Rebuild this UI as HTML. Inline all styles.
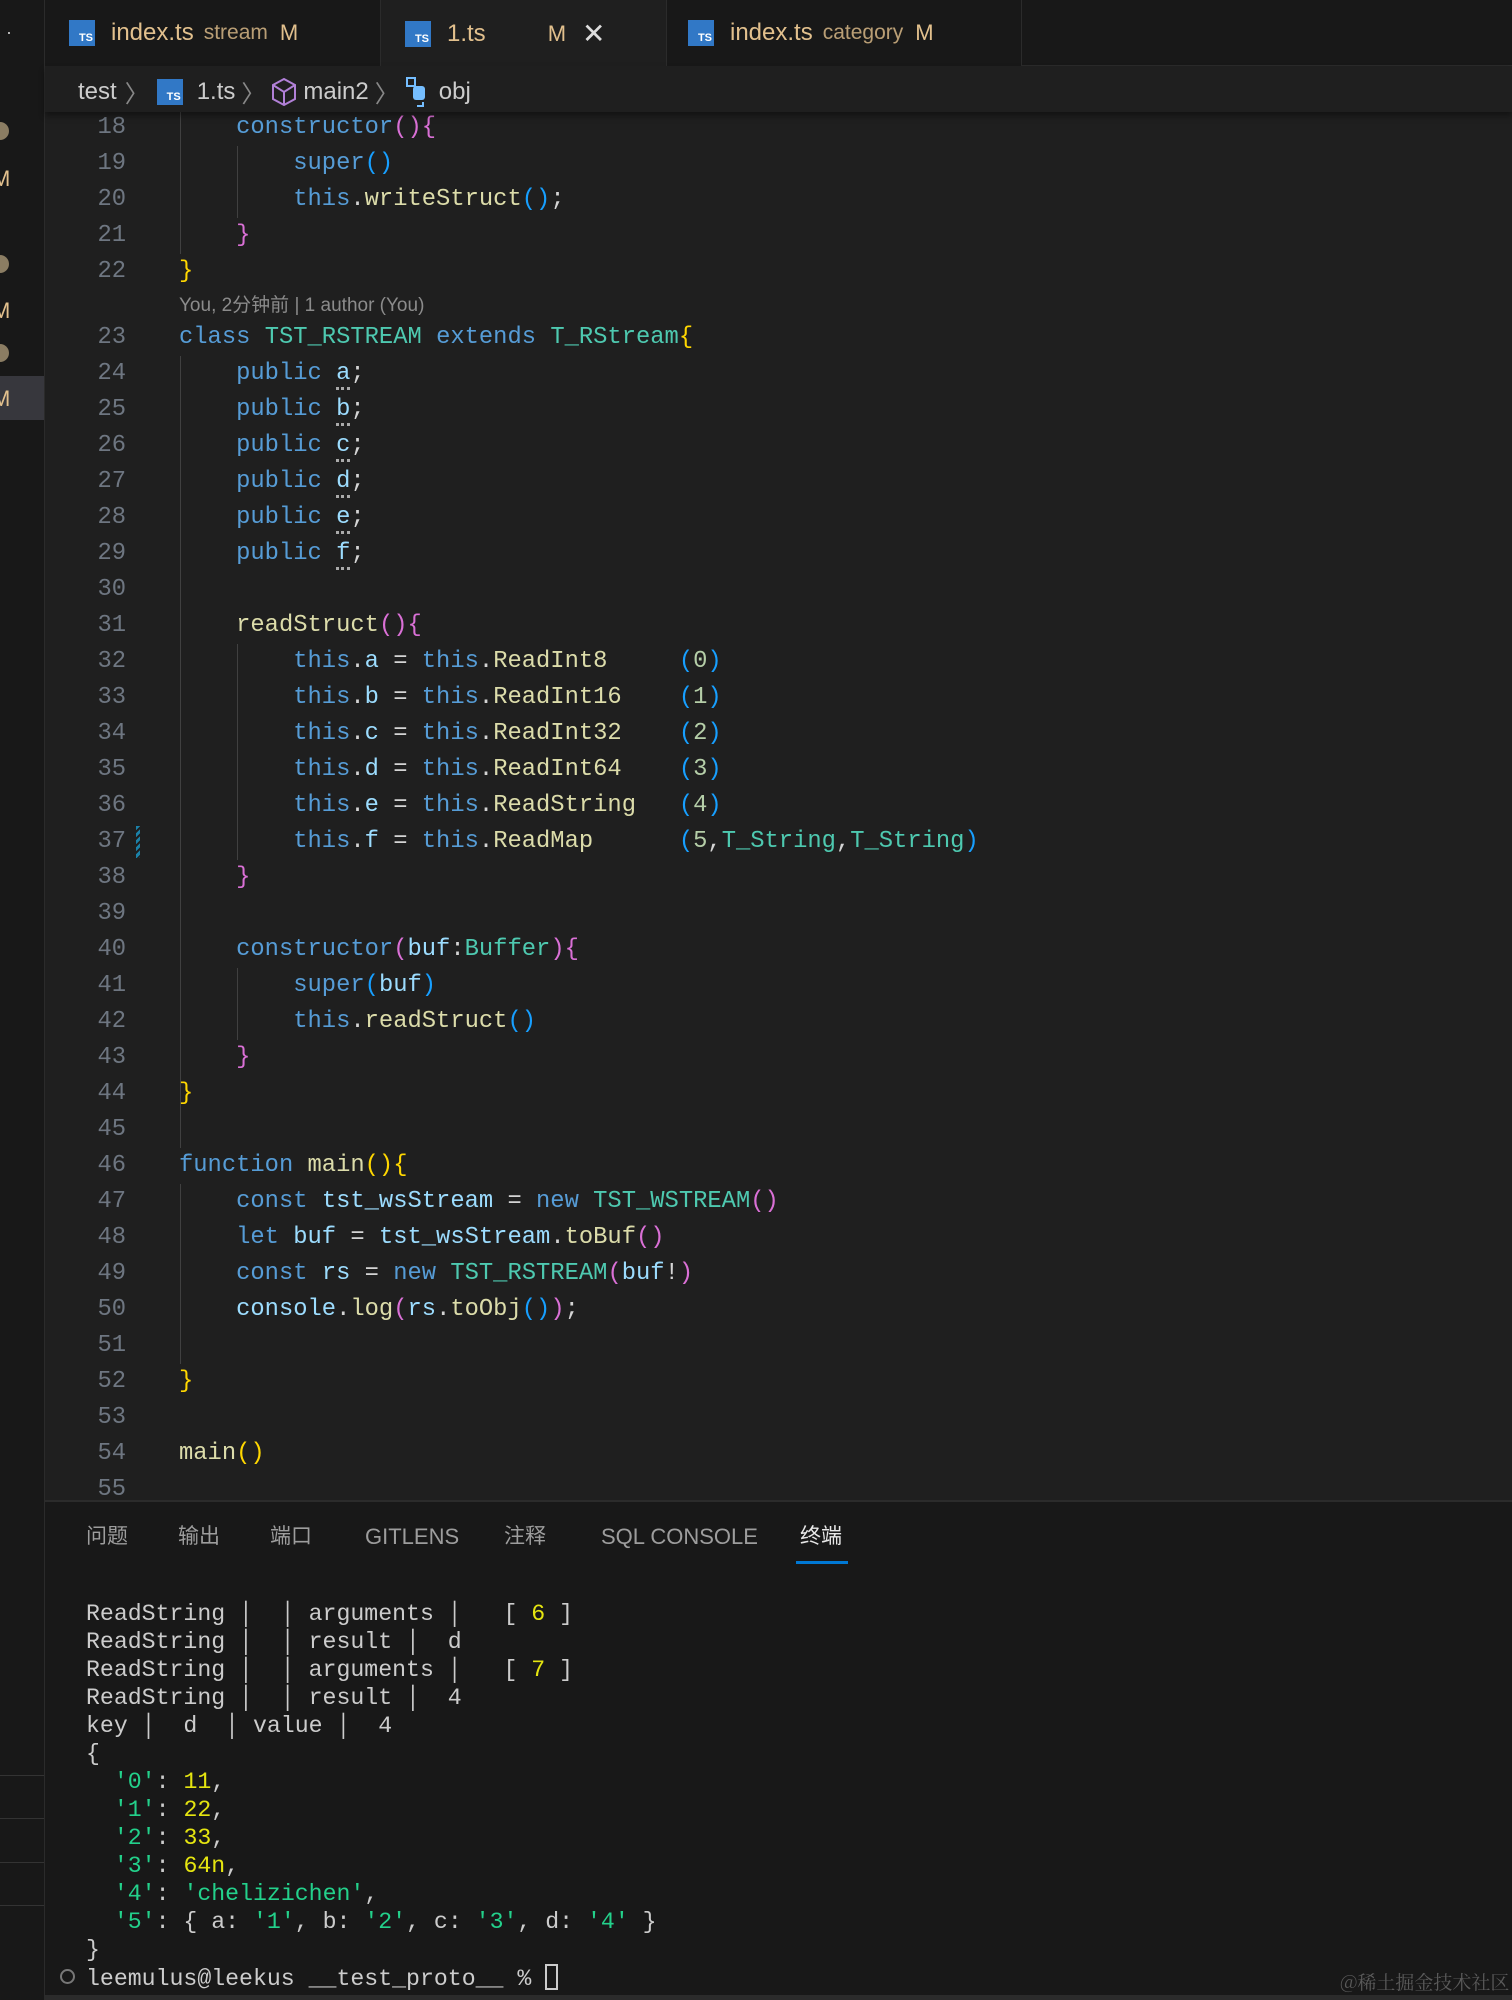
<!DOCTYPE html>
<html><head><meta charset="utf-8"><style>
*{margin:0;padding:0;box-sizing:border-box}
body{width:1512px;height:2000px;background:#1f1f1f;position:relative;overflow:hidden;font-family:"Liberation Sans","Noto Sans CJK SC",sans-serif}
.abs{position:absolute}
#act{left:0;top:0;width:45px;height:2000px;background:#181818;border-right:1px solid #2b2b2b}
#tabs{left:45px;top:0;width:1467px;height:66px;background:#181818;border-bottom:1px solid #2b2b2b}
.tab{position:absolute;top:0;height:66px;border-right:1px solid #2b2b2b;font-size:24px;color:#e2c08d;display:flex;align-items:center;background:#181818}
.ts{display:inline-block;width:26px;height:26px;background:#3178c6;color:#fff;font-size:11px;font-weight:bold;text-align:right;padding:12px 2px 0 0;line-height:12px;margin-right:16px}
.desc{font-size:21px;opacity:.8;margin-left:10px}
#bc{left:45px;top:66px;width:1467px;height:46px;background:#1f1f1f;font-size:24px;color:#cccccc;box-shadow:0 4px 6px #0006;z-index:2}
.code{font-family:"Liberation Mono",monospace;font-size:23.8px;line-height:36px;white-space:pre}
.ln{position:absolute;left:45px;width:81px;text-align:right;color:#6e7681}
.cl{position:absolute;left:179px;color:#d4d4d4}
.k{color:#569cd6}.t{color:#4ec9b0}.f{color:#dcdcaa}.v{color:#9cdcfe}.y{color:#ffd700}.p{color:#da70d6}.b{color:#179fff}.n{color:#b5cea8}
.dot{border-bottom:3px dotted #aaa}
.g{position:absolute;width:1px;background:#404040}
#panel{left:45px;top:1500px;width:1467px;height:500px;background:#181818;border-top:2px solid #2b2b2b}
.pt{position:absolute;top:1520px;height:34px;line-height:34px;font-size:21px;color:#9d9d9d;display:flex;align-items:center;white-space:nowrap}
.term{font-family:"Liberation Mono",monospace;font-size:23.2px;line-height:28px;white-space:pre;color:#cccccc;position:absolute;left:86px;top:1600px}
.tg{color:#4ec9b0}.ty{color:#e5e510}.tg2{color:#23d18b}
</style></head><body>
<div id="act" class="abs"></div>
<div class="abs" style="left:0;top:376px;width:44px;height:44px;background:#37373d"></div>
<div class="abs" style="left:0;top:122px;width:9px;height:18px;border-radius:0 9px 9px 0;background:#8b7d63"></div>
<div class="abs" style="left:0;top:255px;width:9px;height:18px;border-radius:0 9px 9px 0;background:#8b7d63"></div>
<div class="abs" style="left:0;top:344px;width:9px;height:18px;border-radius:0 9px 9px 0;background:#8b7d63"></div>
<div class="abs" style="left:-8px;top:166px;font-size:22px;color:#e2c08d">M</div>
<div class="abs" style="left:-8px;top:298px;font-size:22px;color:#e2c08d">M</div>
<div class="abs" style="left:-8px;top:386px;font-size:22px;color:#e2c08d">M</div>
<div class="abs" style="left:6px;top:22px;color:#ccc;font-size:18px">·</div>
<div class="abs" style="left:0;top:1775px;width:44px;height:1px;background:#333"></div>
<div class="abs" style="left:0;top:1818px;width:44px;height:1px;background:#333"></div>
<div class="abs" style="left:0;top:1862px;width:44px;height:1px;background:#333"></div>
<div class="abs" style="left:0;top:1905px;width:44px;height:1px;background:#333"></div>

<div id="tabs" class="abs">
<div class="tab" style="left:0;width:336px;padding-left:24px"><span class="ts">TS</span>index.ts<span class="desc">stream</span><span style="margin-left:12px;font-size:22px">M</span></div>
<div class="tab" style="left:336px;width:286px;padding-left:24px;background:#1f1f1f;height:67px"><span class="ts">TS</span>1.ts<span style="margin-left:62px;font-size:22px">M</span><span style="margin-left:16px;color:#ddd;font-size:28px">✕</span></div>
<div class="tab" style="left:622px;width:355px;padding-left:21px"><span class="ts">TS</span>index.ts<span class="desc">category</span><span style="margin-left:12px;font-size:22px">M</span></div>
</div>

<div id="bc" class="abs"><div style="position:absolute;left:33px;top:8px;display:flex;align-items:center;white-space:nowrap">test<span style="color:#888;margin:0 8px">〉</span><span class="ts" style="margin-right:14px">TS</span>1.ts<span style="color:#888;margin:0 6px">〉</span><svg width="26" height="30" viewBox="0 0 26 30" style="margin-right:6px"><path d="M13 2 L24 8 L24 22 L13 28 L2 22 L2 8 Z M2 8 L13 15 L24 8 M13 15 L13 28" fill="none" stroke="#b180d7" stroke-width="2"/></svg>main2<span style="color:#888;margin:0 6px">〉</span><svg width="28" height="32" viewBox="0 0 28 32" style="margin-right:6px"><rect x="2" y="2" width="8" height="8" fill="none" stroke="#75beff" stroke-width="2"/><rect x="8" y="10" width="12" height="14" rx="3" fill="#75beff"/><path d="M18 26 v4 h-6" fill="none" stroke="#75beff" stroke-width="2"/></svg>obj</div></div>

<div class="g" style="left:180px;top:110px;height:144px"></div>
<div class="g" style="left:237px;top:146px;height:72px"></div>
<div class="g" style="left:180px;top:356px;height:792px"></div>
<div class="g" style="left:237px;top:644px;height:216px"></div>
<div class="g" style="left:237px;top:968px;height:72px"></div>
<div class="g" style="left:180px;top:1184px;height:180px"></div>
<div class="abs" style="left:136px;top:826px;width:4px;height:32px;background:repeating-linear-gradient(135deg,#1b81a8 0 3px,#1f1f1f 3px 5px)"></div>

<div class="code">
<div class="ln" style="top:110px">18</div><div class="cl" style="top:110px">    <span class="k">constructor</span><span class="p">()</span><span class="p">{</span></div>
<div class="ln" style="top:146px">19</div><div class="cl" style="top:146px">        <span class="k">super</span><span class="b">()</span></div>
<div class="ln" style="top:182px">20</div><div class="cl" style="top:182px">        <span class="k">this</span>.<span class="f">writeStruct</span><span class="b">()</span>;</div>
<div class="ln" style="top:218px">21</div><div class="cl" style="top:218px">    <span class="p">}</span></div>
<div class="ln" style="top:254px">22</div><div class="cl" style="top:254px"><span class="y">}</span></div>
<div class="abs" style="left:179px;top:290px;font-family:'Liberation Sans','Noto Sans CJK SC',sans-serif;font-size:19px;line-height:32px;color:#8b8b8b">You, 2分钟前 | 1 author (You)</div>
<div class="ln" style="top:320px">23</div><div class="cl" style="top:320px"><span class="k">class</span> <span class="t">TST_RSTREAM</span> <span class="k">extends</span> <span class="t">T_RStream</span><span class="y">{</span></div>
<div class="ln" style="top:356px">24</div><div class="cl" style="top:356px">    <span class="k">public</span> <span class="v dot">a</span>;</div>
<div class="ln" style="top:392px">25</div><div class="cl" style="top:392px">    <span class="k">public</span> <span class="v dot">b</span>;</div>
<div class="ln" style="top:428px">26</div><div class="cl" style="top:428px">    <span class="k">public</span> <span class="v dot">c</span>;</div>
<div class="ln" style="top:464px">27</div><div class="cl" style="top:464px">    <span class="k">public</span> <span class="v dot">d</span>;</div>
<div class="ln" style="top:500px">28</div><div class="cl" style="top:500px">    <span class="k">public</span> <span class="v dot">e</span>;</div>
<div class="ln" style="top:536px">29</div><div class="cl" style="top:536px">    <span class="k">public</span> <span class="v dot">f</span>;</div>
<div class="ln" style="top:572px">30</div>
<div class="ln" style="top:608px">31</div><div class="cl" style="top:608px">    <span class="f">readStruct</span><span class="p">()</span><span class="p">{</span></div>
<div class="ln" style="top:644px">32</div><div class="cl" style="top:644px">        <span class="k">this</span>.<span class="v">a</span> = <span class="k">this</span>.<span class="f">ReadInt8</span>     <span class="b">(</span><span class="n">0</span><span class="b">)</span></div>
<div class="ln" style="top:680px">33</div><div class="cl" style="top:680px">        <span class="k">this</span>.<span class="v">b</span> = <span class="k">this</span>.<span class="f">ReadInt16</span>    <span class="b">(</span><span class="n">1</span><span class="b">)</span></div>
<div class="ln" style="top:716px">34</div><div class="cl" style="top:716px">        <span class="k">this</span>.<span class="v">c</span> = <span class="k">this</span>.<span class="f">ReadInt32</span>    <span class="b">(</span><span class="n">2</span><span class="b">)</span></div>
<div class="ln" style="top:752px">35</div><div class="cl" style="top:752px">        <span class="k">this</span>.<span class="v">d</span> = <span class="k">this</span>.<span class="f">ReadInt64</span>    <span class="b">(</span><span class="n">3</span><span class="b">)</span></div>
<div class="ln" style="top:788px">36</div><div class="cl" style="top:788px">        <span class="k">this</span>.<span class="v">e</span> = <span class="k">this</span>.<span class="f">ReadString</span>   <span class="b">(</span><span class="n">4</span><span class="b">)</span></div>
<div class="ln" style="top:824px">37</div><div class="cl" style="top:824px">        <span class="k">this</span>.<span class="v">f</span> = <span class="k">this</span>.<span class="f">ReadMap</span>      <span class="b">(</span><span class="n">5</span>,<span class="t">T_String</span>,<span class="t">T_String</span><span class="b">)</span></div>
<div class="ln" style="top:860px">38</div><div class="cl" style="top:860px">    <span class="p">}</span></div>
<div class="ln" style="top:896px">39</div>
<div class="ln" style="top:932px">40</div><div class="cl" style="top:932px">    <span class="k">constructor</span><span class="p">(</span><span class="v">buf</span>:<span class="t">Buffer</span><span class="p">)</span><span class="p">{</span></div>
<div class="ln" style="top:968px">41</div><div class="cl" style="top:968px">        <span class="k">super</span><span class="b">(</span><span class="v">buf</span><span class="b">)</span></div>
<div class="ln" style="top:1004px">42</div><div class="cl" style="top:1004px">        <span class="k">this</span>.<span class="f">readStruct</span><span class="b">()</span></div>
<div class="ln" style="top:1040px">43</div><div class="cl" style="top:1040px">    <span class="p">}</span></div>
<div class="ln" style="top:1076px">44</div><div class="cl" style="top:1076px"><span class="y">}</span></div>
<div class="ln" style="top:1112px">45</div>
<div class="ln" style="top:1148px">46</div><div class="cl" style="top:1148px"><span class="k">function</span> <span class="f">main</span><span class="y">()</span><span class="y">{</span></div>
<div class="ln" style="top:1184px">47</div><div class="cl" style="top:1184px">    <span class="k">const</span> <span class="v">tst_wsStream</span> = <span class="k">new</span> <span class="t">TST_WSTREAM</span><span class="p">()</span></div>
<div class="ln" style="top:1220px">48</div><div class="cl" style="top:1220px">    <span class="k">let</span> <span class="v">buf</span> = <span class="v">tst_wsStream</span>.<span class="f">toBuf</span><span class="p">()</span></div>
<div class="ln" style="top:1256px">49</div><div class="cl" style="top:1256px">    <span class="k">const</span> <span class="v">rs</span> = <span class="k">new</span> <span class="t">TST_RSTREAM</span><span class="p">(</span><span class="v">buf</span>!<span class="p">)</span></div>
<div class="ln" style="top:1292px">50</div><div class="cl" style="top:1292px">    <span class="v">console</span>.<span class="f">log</span><span class="p">(</span><span class="v">rs</span>.<span class="f">toObj</span><span class="b">()</span><span class="p">)</span>;</div>
<div class="ln" style="top:1328px">51</div>
<div class="ln" style="top:1364px">52</div><div class="cl" style="top:1364px"><span class="y">}</span></div>
<div class="ln" style="top:1400px">53</div>
<div class="ln" style="top:1436px">54</div><div class="cl" style="top:1436px"><span class="f">main</span><span class="y">()</span></div>
<div class="ln" style="top:1472px">55</div>
</div>

<div id="panel" class="abs"></div>
<div class="pt" style="left:86px">问题</div>
<div class="pt" style="left:178px">输出</div>
<div class="pt" style="left:270px">端口</div>
<div class="pt" style="left:365px;font-size:22px">GITLENS</div>
<div class="pt" style="left:504px">注释</div>
<div class="pt" style="left:601px;font-size:22px">SQL CONSOLE</div>
<div class="pt" style="left:800px;color:#e7e7e7">终端</div>
<div class="abs" style="left:796px;top:1561px;width:52px;height:3px;background:#0078d4"></div>

<div class="term">ReadString │  │ arguments │   [ <span class="ty">6</span> ]
ReadString │  │ result │  d
ReadString │  │ arguments │   [ <span class="ty">7</span> ]
ReadString │  │ result │  4
key │  d  │ value │  4
{
  <span class="tg2">'0'</span>: <span class="ty">11</span>,
  <span class="tg2">'1'</span>: <span class="ty">22</span>,
  <span class="tg2">'2'</span>: <span class="ty">33</span>,
  <span class="tg2">'3'</span>: <span class="ty">64n</span>,
  <span class="tg2">'4'</span>: <span class="tg2">'chelizichen'</span>,
  <span class="tg2">'5'</span>: { a: <span class="tg2">'1'</span>, b: <span class="tg2">'2'</span>, c: <span class="tg2">'3'</span>, d: <span class="tg2">'4'</span> }
}
leemulus@leekus __test_proto__ % <span style="display:inline-block;width:13px;height:26px;border:2px solid #ccc;vertical-align:-5px"></span></div>
<div class="abs" style="left:60px;top:1969px;width:15px;height:15px;border:2px solid #777;border-radius:50%"></div>
<div class="abs" style="left:1340px;top:1968px;font-size:19px;color:#5a5a5a;white-space:nowrap;font-family:'Noto Serif CJK SC',serif">@稀土掘金技术社区</div>
<div class="abs" style="left:45px;top:1995px;width:1467px;height:5px;background:#2b2b2b"></div>
</body></html>
